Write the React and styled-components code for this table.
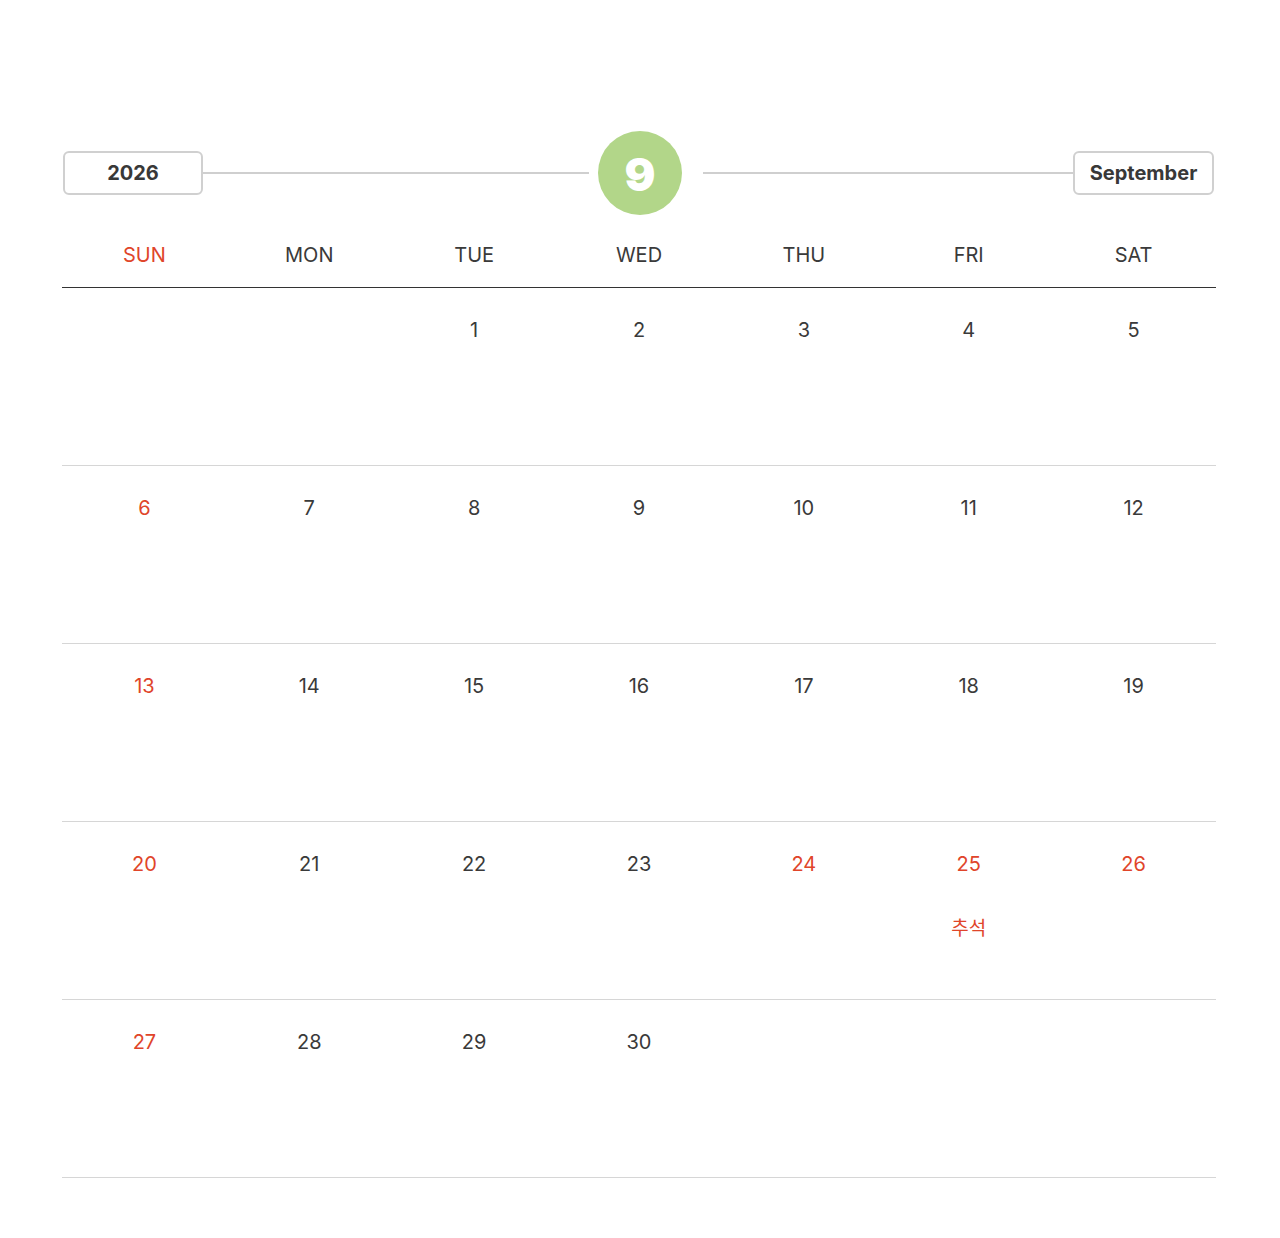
import React from 'react';
import styled, { createGlobalStyle } from 'styled-components';

const GlobalStyle = createGlobalStyle`
  body {
    margin: 0;
    background: #fff;
    font-family: Inter, "Noto Sans", "Noto Sans CJK KR", sans-serif;
    color: #333;
  }
`;

const RED = '#e0452a';

const Page = styled.div`
  width: 1154px;
  margin: 0 auto;
  padding: 130px 0 60px;
  transform: translateX(-1px);
`;

const TopBar = styled.div`
  display: flex;
  align-items: center;
  height: 86px;
  padding: 0 2px 0 1px;
`;

const LabelBox = styled.div`
  flex: none;
  width: ${(p) => p.$w}px;
  height: 44px;
  box-sizing: border-box;
  border: 2px solid #d0d0d0;
  border-radius: 6px;
  display: flex;
  align-items: center;
  justify-content: center;
  font-size: 20px;
  font-weight: 700;
  color: #383838;
`;

const Line = styled.div`
  flex: none;
  width: ${(p) => p.$w}px;
  height: 2px;
  background: #cfcfcf;
  margin: 0 ${(p) => p.$r}px 0 ${(p) => p.$l}px;
`;

const MonthBadge = styled.div`
  flex: none;
  width: 84px;
  height: 84px;
  border-radius: 50%;
  background: #b2d689;
  color: #fff;
  display: flex;
  align-items: center;
  justify-content: center;
  font-size: 46px;
  font-weight: 900;
  padding-top: 2px;
  box-sizing: border-box;
`;

const Grid = styled.div`
  display: grid;
  grid-template-columns: repeat(7, 1fr);
`;

const HeadRow = styled(Grid)`
  height: 69px;
  border-bottom: 1px solid #333;
  align-items: center;
  margin-top: 2px;
`;

const DayName = styled.div`
  text-align: center;
  font-size: 20px;
  color: ${(p) => (p.$red ? RED : '#3a3a3a')};
  padding-top: 4px;
`;

const Week = styled(Grid)`
  height: 177px;
  border-bottom: 1px solid #d6d6d6;
`;

const Cell = styled.div`
  display: flex;
  flex-direction: column;
  align-items: center;
  padding-top: 30px;
`;

const Num = styled.div`
  font-size: 20px;
  line-height: 24px;
  color: ${(p) => (p.$red ? RED : '#3a3a3a')};
`;

const Holiday = styled.div`
  margin-top: 37px;
  font-size: 19px;
  color: ${RED};
`;

const days = ['SUN', 'MON', 'TUE', 'WED', 'THU', 'FRI', 'SAT'];
const redDates = [24, 25, 26];
const holidays = { 25: '추석' };

const weeks = [];
let cells = [null, null];
for (let d = 1; d <= 30; d++) {
  cells.push(d);
  if (cells.length === 7) {
    weeks.push(cells);
    cells = [];
  }
}
while (cells.length < 7) cells.push(null);
weeks.push(cells);

export default function App() {
  return (
    <>
      <GlobalStyle />
      <Page>
        <TopBar>
          <LabelBox $w={140}>2026</LabelBox>
          <Line $w={386} $l={0} $r={9} />
          <MonthBadge>9</MonthBadge>
          <Line $w={370} $l={21} $r={0} />
          <LabelBox $w={141}>September</LabelBox>
        </TopBar>
        <HeadRow>
          {days.map((d, i) => (
            <DayName key={d} $red={i === 0}>{d}</DayName>
          ))}
        </HeadRow>
        {weeks.map((w, wi) => (
          <Week key={wi}>
            {w.map((d, i) => (
              <Cell key={i}>
                {d && (
                  <>
                    <Num $red={i === 0 || redDates.includes(d)}>{d}</Num>
                    {holidays[d] && <Holiday>{holidays[d]}</Holiday>}
                  </>
                )}
              </Cell>
            ))}
          </Week>
        ))}
      </Page>
    </>
  );
}
